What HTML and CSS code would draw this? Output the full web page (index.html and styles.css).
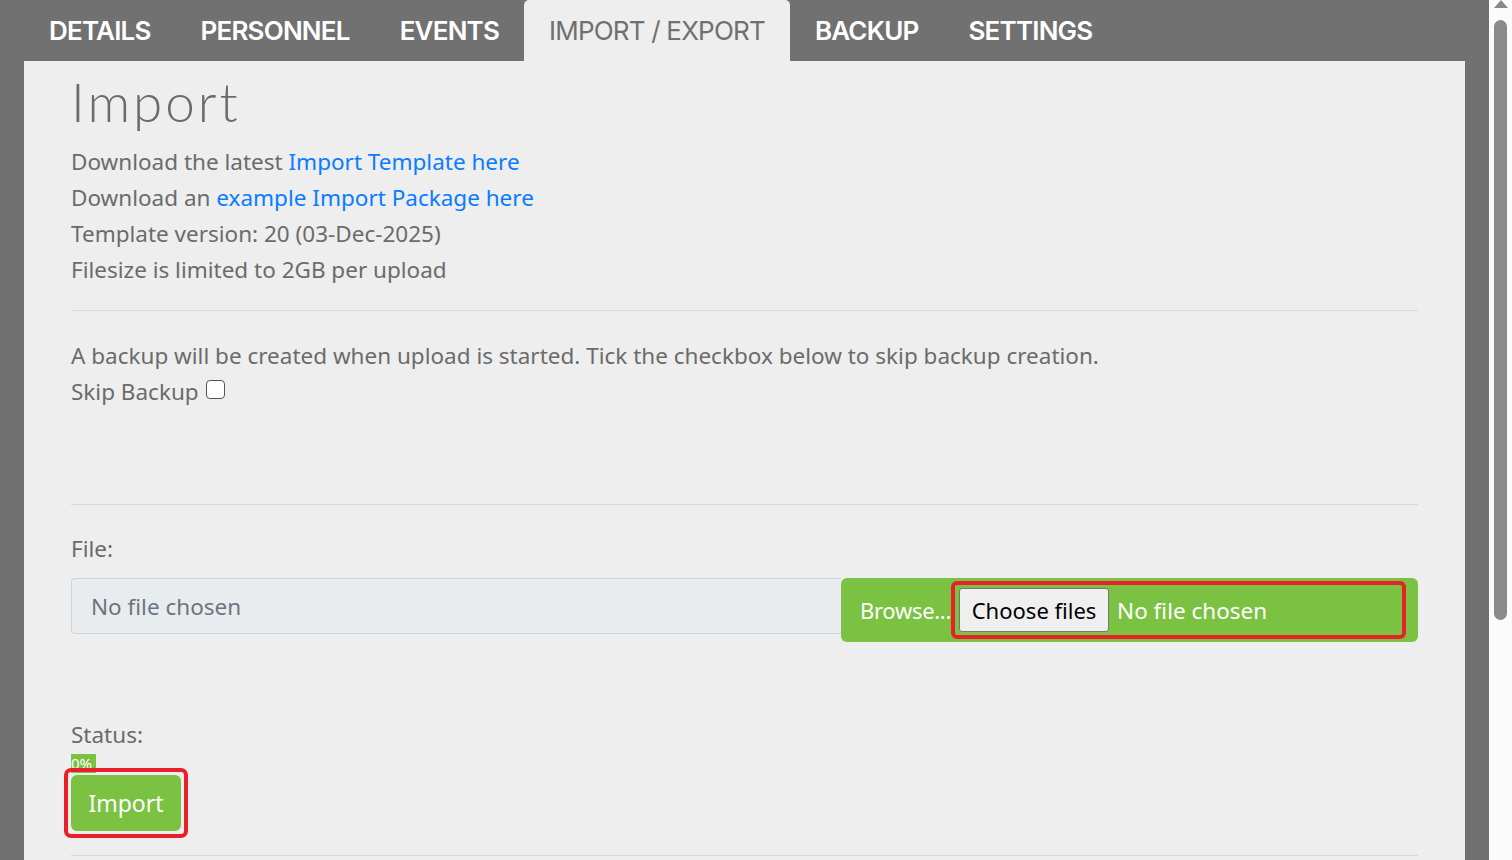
FILE: index.html
```html
<!DOCTYPE html>
<html lang="en">
<head>
  <meta charset="UTF-8"/>
  <meta name="viewport" content="width=device-width, initial-scale=1.0"/>
  <title>Import / Export</title>
  <link rel="stylesheet" href="styles.css">
</head>
<body>
  <div class="page">
    <nav class="tabs">
      <a class="tab" href="#">Details</a>
      <a class="tab" href="#">Personnel</a>
      <a class="tab" href="#">Events</a>
      <a class="tab active" href="#">Import / Export</a>
      <a class="tab" href="#">Backup</a>
      <a class="tab" href="#">Settings</a>
    </nav>

    <main class="panel">
      <h1 class="page-title">Import</h1>
      <div class="info">
        <p>Download the latest <a href="#">Import Template here</a></p>
        <p>Download an <a href="#">example Import Package here</a></p>
        <p>Template version: 20 (03-Dec-2025)</p>
        <p>Filesize is limited to 2GB per upload</p>
      </div>

      <hr>

      <div class="backup">
        <p>A backup will be created when upload is started. Tick the checkbox below to skip backup creation.</p>
        <label class="skip">Skip Backup <span class="checkbox"></span></label>
      </div>

      <hr>

      <div class="upload">
        <p class="field-label">File:</p>
        <div class="input-group">
          <div class="file-name">No file chosen</div>
          <div class="browse">
            <span class="browse-label">Browse...</span>
            <div class="highlight file-box">
              <span class="choose-btn">Choose files</span>
              <span class="file-status">No file chosen</span>
            </div>
          </div>
        </div>

        <p class="field-label status-label">Status:</p>
        <div class="progress"><span class="progress-bar">0%</span></div>
        <div class="highlight import-box">
          <button class="import-btn" type="button">Import</button>
        </div>
      </div>

      <hr class="last">
    </main>
  </div>

  <div class="scrollbar">
    <span class="arrow-up"></span>
    <span class="thumb"></span>
  </div>
</body>
</html>
```

FILE: styles.css
```css
:root {
  --frame: #717171;
  --panel: #eeeeee;
  --text: #6b6b6b;
  --link: #0a7cff;
  --green: #7bc142;
  --red: #e8202a;
  --rule: #d9d9d9;
}

* {
  box-sizing: border-box;
  margin: 0;
  padding: 0;
}

body {
  display: flex;
  height: 100vh;
  overflow: hidden;
  background: var(--frame);
  font-family: 'Noto Sans', 'Open Sans', sans-serif;
  color: var(--text);
}

.page {
  flex: 1;
  padding: 0 24px;
}

/* top tab strip */
.tabs {
  display: flex;
  height: 61px;
}

.tab {
  display: flex;
  align-items: center;
  padding: 0 25px;
  color: #fff;
  text-decoration: none;
  text-transform: uppercase;
  font-family: 'Inter', sans-serif;
  font-weight: 600;
  font-size: 26px;
  letter-spacing: -0.8px;
}

.tab.active {
  background: var(--panel);
  color: #707070;
  font-weight: 400;
  border-radius: 5px 5px 0 0;
}

.panel {
  background: var(--panel);
  padding: 10px 47px 0;
  height: calc(100vh - 61px);
}

.page-title {
  font-family: 'Lato', sans-serif;
  font-weight: 300;
  font-size: 53px;
  line-height: 62px;
  color: var(--text);
  letter-spacing: 3px;
}

p, .skip {
  font-size: 22.5px;
  line-height: 36px;
}

.info {
  margin-top: 11px;
}

a {
  color: var(--link);
  text-decoration: none;
}

hr {
  border: none;
  border-top: 1px solid var(--rule);
  margin: 22px 0 27px;
}

.backup {
  height: 144px;
}

.skip {
  display: flex;
  align-items: center;
  gap: 7px;
}

.checkbox {
  width: 19px;
  height: 19px;
  border: 1.5px solid #555;
  border-radius: 4px;
  background: #fff;
  margin-top: -5px;
}

.field-label {
  margin-top: -1px;
}

/* file picker */
.input-group {
  display: flex;
  align-items: flex-start;
  margin-top: 11px;
}

.file-name {
  width: 770px;
  height: 56px;
  display: flex;
  align-items: center;
  padding-left: 19px;
  background: #e9ecef;
  border: 1px solid #ced4da;
  border-right: none;
  border-radius: 4px 0 0 4px;
  font-size: 22.5px;
  color: #6c757d;
}

.browse {
  flex: 1;
  height: 64px;
  display: flex;
  align-items: center;
  background: var(--green);
  border-radius: 6px;
  padding: 0 12px 0 19px;
  color: #fff;
  font-size: 22px;
}

.browse-label {
  flex-shrink: 0;
  white-space: nowrap;
  letter-spacing: -0.3px;
}

.highlight {
  border: 4px solid var(--red);
  border-radius: 6px;
}

.file-box {
  flex: 1;
  height: 58px;
  display: flex;
  align-items: center;
  padding-left: 4px;
}

.choose-btn {
  height: 44px;
  width: 150px;
  display: flex;
  align-items: center;
  justify-content: center;
  background: #efefef;
  border: 1px solid #767676;
  border-radius: 3px;
  color: #000;
  font-size: 22px;
}

.file-status {
  margin-left: 8px;
  font-size: 22.5px;
}

.status-label {
  margin-top: 75px;
}

.progress {
  height: 19px;
  margin-top: -1px;
}

.progress-bar {
  display: inline-block;
  width: 25px;
  height: 19px;
  background: var(--green);
  color: #fff;
  font-size: 15px;
  line-height: 19px;
  white-space: nowrap;
}

.import-box {
  display: inline-block;
  padding: 3px;
  margin: -3px 0 0 -7px;
  border-radius: 7px;
}

.import-btn {
  display: block;
  width: 110px;
  height: 56px;
  border: none;
  border-radius: 6px;
  background: var(--green);
  color: #fff;
  font-family: inherit;
  font-size: 23px;
}

hr.last {
  margin-top: 17px;
}

/* window scrollbar */
.scrollbar {
  width: 23px;
  background: #fbfbfb;
  display: flex;
  flex-direction: column;
  align-items: center;
}

.arrow-up {
  width: 0;
  height: 0;
  border-left: 7px solid transparent;
  border-right: 7px solid transparent;
  border-bottom: 8px solid #8a8a8a;
}

.thumb {
  width: 13px;
  height: 600px;
  margin-top: 12px;
  background: #8a8a8a;
  border-radius: 7px;
}
```
